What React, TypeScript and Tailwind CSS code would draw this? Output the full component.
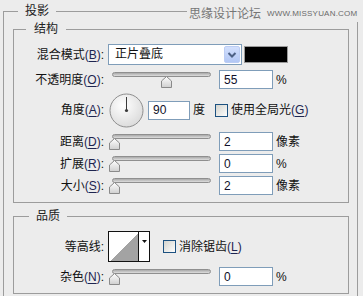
import React from "react";

const font = { fontFamily: '"Liberation Sans", "Noto Sans CJK SC", sans-serif' };

const Label = ({ text, k }: { text: string; k?: string }) => (
  <span className="w-[90px] shrink-0 text-right leading-[16px]">
    {text}
    {k && (
      <span className="text-[#1d2550]">
        (<span className="underline underline-offset-2">{k}</span>)
      </span>
    )}
    :
  </span>
);

const NumBox = ({ value, w = "w-[54px]" }: { value: string; w?: string }) => (
  <div
    className={`${w} flex h-[19px] shrink-0 items-center border border-[#7f9db9] bg-white pl-[4px] text-[12px] leading-none text-[#10102a]`}
  >
    {value}
  </div>
);

const Thumb = ({ left }: { left: number }) => (
  <svg
    className="absolute top-[4px]"
    style={{ left }}
    width="11"
    height="12"
    viewBox="0 0 11 12"
  >
    <defs>
      <linearGradient id="th" x1="0" y1="0" x2="0" y2="1">
        <stop offset="0" stopColor="#ffffff" />
        <stop offset="1" stopColor="#cfcfcf" />
      </linearGradient>
    </defs>
    <polygon
      points="5.5,0.5 10.5,5 10.5,11.5 0.5,11.5 0.5,5"
      fill="url(#th)"
      stroke="#8a8a8a"
    />
  </svg>
);

const Slider = ({ value }: { value: number }) => (
  <div className="ml-[4px] w-[111px] shrink-0">
    <div className="relative ml-[4px] h-[19px] w-[99px]">
      <div className="mt-[4px] h-[5px] rounded-full border border-[#8f8f8f] bg-gradient-to-b from-[#a9a9a9] to-[#dedede]" />
      <Thumb left={value * 95 - 3.5} />
    </div>
  </div>
);

const Unit = ({ t }: { t: string }) => <span className="ml-[3px] leading-[16px]">{t}</span>;

const SliderRow = ({
  label,
  k,
  value,
  num,
  unit,
  mt,
}: {
  label: string;
  k: string;
  value: number;
  num: string;
  unit: string;
  mt: string;
}) => (
  <div className={`flex h-[19px] items-center ${mt}`}>
    <Label text={label} k={k} />
    <Slider value={value} />
    <NumBox value={num} />
    <Unit t={unit} />
  </div>
);

const CheckBox = () => (
  <div className="h-[13px] w-[13px] shrink-0 border border-[#1c5180] bg-gradient-to-br from-[#d4d4ce] to-[#fdfdfd]" />
);

const Dial = () => (
  <svg width="35" height="35" viewBox="0 0 35 35" className="ml-[5px] shrink-0">
    <defs>
      <radialGradient id="dl" cx="0.4" cy="0.35" r="0.7">
        <stop offset="0" stopColor="#ffffff" />
        <stop offset="1" stopColor="#dadada" />
      </radialGradient>
    </defs>
    <circle cx="17.5" cy="17.5" r="16.5" fill="url(#dl)" stroke="#8e8e8e" />
    <line x1="17.5" y1="17.5" x2="17.5" y2="4" stroke="#3a3a3a" strokeWidth="1" />
    <circle cx="17.5" cy="17.5" r="1.6" fill="#3a3a3a" />
  </svg>
);

export default function App() {
  return (
    <div
      className="relative h-[296px] w-[363px] overflow-hidden bg-[#ececec] text-[12px] text-[#111]"
      style={font}
    >
      <fieldset className="ml-[3px] mt-[3px] w-[355px] border border-[#9c9c9c] pb-[10px] pl-[9px] pr-[8px] pt-[2px]">
        <legend className="ml-[5px] px-[7px] leading-[16px] text-[#222]">投影</legend>

        <fieldset className="w-[336px] border border-[#9c9c9c] pb-[7px] pt-[7px]">
          <legend className="ml-[12px] px-[8px] leading-[16px] text-[#222]">结构</legend>

          <div className="flex h-[21px] items-center">
            <Label text="混合模式" k="B" />
            <div className="ml-[4px] flex h-[21px] w-[134px] shrink-0 border border-[#7f9db9] bg-white">
              <span className="flex-1 pl-[6px] leading-[19px]">正片叠底</span>
              <div className="mr-[1px] mt-[1px] flex h-[17px] w-[16px] items-center justify-center rounded-[2px] border border-[#bccdf4] bg-gradient-to-b from-[#d3e0fd] to-[#b2c7f5]">
                <svg width="10" height="8" viewBox="0 0 10 8">
                  <polyline points="1.5,2 5,5.5 8.5,2" fill="none" stroke="#4d6185" strokeWidth="2" />
                </svg>
              </div>
            </div>
            <div className="ml-[2px] h-[17px] w-[44px] shrink-0 border border-[#9a9a9a] bg-black" />
          </div>

          <SliderRow label="不透明度" k="O" value={0.55} num="55" unit="%" mt="mt-[5px]" />

          <div className="mt-[4px] flex h-[34px] items-center">
            <Label text="角度" k="A" />
            <Dial />
            <div className="ml-[4px]">
              <NumBox value="90" w="w-[42px]" />
            </div>
            <span className="ml-[3px] leading-[16px]">度</span>
            <div className="ml-[10px]">
              <CheckBox />
            </div>
            <span className="ml-[3px] leading-[16px]">
              使用全局光<span className="text-[#1d2550]">(<span className="underline underline-offset-2">G</span>)</span>
            </span>
          </div>

          <SliderRow label="距离" k="D" value={0} num="2" unit="像素" mt="mt-[5px]" />
          <SliderRow label="扩展" k="R" value={0} num="0" unit="%" mt="mt-[3px]" />
          <SliderRow label="大小" k="S" value={0} num="2" unit="像素" mt="mt-[3px]" />
        </fieldset>

        <fieldset className="mt-[5px] w-[336px] border border-[#9c9c9c] pb-[7px] pt-[7px]">
          <legend className="ml-[15px] px-[7px] leading-[16px] text-[#222]">品质</legend>

          <div className="flex h-[31px] items-center">
            <Label text="等高线" />
            <div className="ml-[4px] flex h-[31px] w-[42px] shrink-0 border border-[#111] bg-white">
              <svg width="29" height="29" viewBox="0 0 29 29" shapeRendering="crispEdges">
                <polygon points="1,29 29,1 29,29" fill="#a3a3a3" />
              </svg>
              <div className="flex flex-1 justify-center border-l border-[#111] pt-[8px]">
                <svg width="5" height="3" viewBox="0 0 5 3">
                  <polygon points="0,0 5,0 2.5,3" fill="#111" />
                </svg>
              </div>
            </div>
            <div className="ml-[13px]">
              <CheckBox />
            </div>
            <span className="ml-[3px] leading-[16px]">
              消除锯齿<span className="text-[#1d2550]">(<span className="underline underline-offset-2">L</span>)</span>
            </span>
          </div>

          <SliderRow label="杂色" k="N" value={0} num="0" unit="%" mt="mt-[5px]" />
        </fieldset>
      </fieldset>

      <div className="absolute left-[187px] top-[6px] flex items-center gap-[6px] bg-[#ececec] px-[2px]">
        <span className="text-[12px] leading-[16px] text-[#767676]">思缘设计论坛</span>
        <span className="text-[8px] leading-[16px] tracking-[0.2px] text-[#6a6a6a]">WWW.MISSYUAN.COM</span>
      </div>
    </div>
  );
}
